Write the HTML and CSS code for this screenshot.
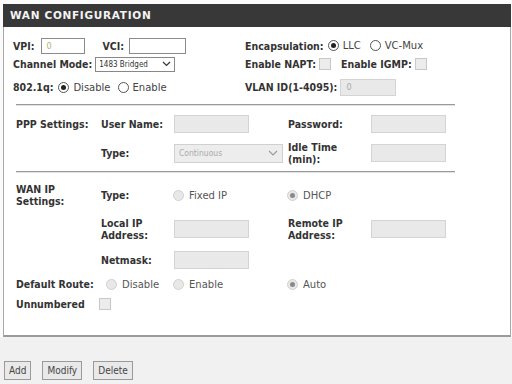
FILE: index.html
```html
<!DOCTYPE html>
<html lang="en">

<head>
    <meta charset="UTF-8">
    <title>WAN Configuration</title>
    <link rel="stylesheet" href="styles.css">
</head>

<body>
    <div class="panel">
        <div class="panel-head">WAN CONFIGURATION</div>

        <div class="top-grid">
            <div class="cell">
                <span class="lbl">VPI:</span>
                <span class="field vpi">0</span>
                <span class="lbl vci-lbl">VCI:</span>
                <span class="field vci"></span>
            </div>
            <div class="cell">
                <span class="lbl">Encapsulation:</span>
                <span class="radio on"></span><span class="val">LLC</span>
                <span class="radio gap-l"></span><span class="val">VC-Mux</span>
            </div>
            <div class="cell">
                <span class="lbl">Channel Mode:</span>
                <span class="select small-select">1483 Bridged
                    <svg width="9" height="6" viewBox="0 0 9 6"><polyline points="1,1 4.5,4.5 8,1" fill="none" stroke="#333" stroke-width="1.2"/></svg>
                </span>
            </div>
            <div class="cell">
                <span class="lbl">Enable NAPT:</span>
                <span class="check"></span>
                <span class="lbl igmp-lbl">Enable IGMP:</span>
                <span class="check"></span>
            </div>
            <div class="cell">
                <span class="lbl">802.1q:</span>
                <span class="radio on q-radio"></span><span class="val">Disable</span>
                <span class="radio gap-s"></span><span class="val">Enable</span>
            </div>
            <div class="cell">
                <span class="lbl">VLAN ID(1-4095):</span>
                <span class="field dis vlan">0</span>
            </div>
        </div>

        <div class="rule"></div>

        <div class="form-grid ppp">
            <span class="lbl">PPP Settings:</span>
            <span class="lbl">User Name:</span>
            <span class="field dis"></span>
            <span class="lbl">Password:</span>
            <span class="field dis"></span>

            <span></span>
            <span class="lbl">Type:</span>
            <span class="select wide-select">Continuous
                <svg width="10" height="6" viewBox="0 0 10 6"><polyline points="1,1 5,5 9,1" fill="none" stroke="#999" stroke-width="1.1"/></svg>
            </span>
            <span class="lbl">Idle Time<br>(min):</span>
            <span class="field dis"></span>
        </div>

        <div class="rule"></div>

        <div class="form-grid wan">
            <span class="lbl">WAN IP<br>Settings:</span>
            <span class="lbl">Type:</span>
            <span class="opt"><span class="radio dis"></span><span class="val">Fixed IP</span></span>
            <span class="opt"><span class="radio dis on"></span><span class="val">DHCP</span></span>
            <span></span>

            <span></span>
            <span class="lbl">Local IP<br>Address:</span>
            <span class="field dis"></span>
            <span class="lbl">Remote IP<br>Address:</span>
            <span class="field dis"></span>

            <span></span>
            <span class="lbl">Netmask:</span>
            <span class="field dis"></span>
            <span></span>
            <span></span>

            <span class="lbl">Default Route:</span>
            <span class="opt route-first"><span class="radio dis"></span><span class="val">Disable</span></span>
            <span class="opt"><span class="radio dis"></span><span class="val">Enable</span></span>
            <span class="opt"><span class="radio dis on"></span><span class="val">Auto</span></span>
            <span></span>

            <span class="lbl">Unnumbered</span>
            <span class="check dis unnum"></span>
            <span></span>
            <span></span>
            <span></span>
        </div>
    </div>

    <div class="footer">
        <button class="btn">Add</button>
        <button class="btn">Modify</button>
        <button class="btn">Delete</button>
    </div>
</body>

</html>
```

FILE: styles.css
```css
* {
    margin: 0;
    padding: 0;
    box-sizing: border-box;
}

body {
    width: 512px;
    height: 384px;
    background-color: #fbfbfb;
    font-family: "DejaVu Sans Condensed", "DejaVu Sans", sans-serif;
    font-size: 10px;
    color: #333;
    overflow: hidden;
}

.panel {
    margin: 4px 1px 0 3px;
    height: 333px;
    background-color: #fff;
    border: 1px solid #a8a8a8;
    border-top: none;
    border-bottom: 2px solid #9a9a9a;
}

.panel-head {
    height: 23px;
    line-height: 23px;
    margin: 0 -1px;
    padding-left: 7px;
    background-color: #383838;
    color: #f4f4f4;
    font-family: "DejaVu Sans", sans-serif;
    font-weight: bold;
    font-size: 10.5px;
    letter-spacing: .7px;
}

.lbl {
    font-weight: bold;
    font-size: 10.5px;
    color: #333;
    line-height: 12px;
}

.val {
    font-family: "DejaVu Sans", sans-serif;
    color: #444;
    margin-left: 4px;
}

/* top block */
.top-grid {
    display: grid;
    grid-template-columns: 232px auto;
    grid-template-rows: 19px 18px 28px;
    padding: 9px 0 0 9px;
}

.cell {
    display: flex;
    align-items: center;
}

.field {
    display: inline-block;
    height: 16px;
    line-height: 14px;
    padding-left: 5px;
    border: 1px solid #8a8a8a;
    background-color: #fff;
    color: #b9ae7a;
    font-size: 9px;
}

.field.dis {
    height: 18px;
    width: 75px;
    border-color: #d4d4d4;
    background-color: #e9e9e9;
    color: #aaa;
}

.vpi {
    width: 44px;
    margin-left: 6px;
}

.vci-lbl {
    margin-left: 18px;
}

.vci {
    width: 57px;
    margin-left: 5px;
}

.vlan.dis {
    width: 56px;
    height: 17px;
    margin-left: 3px;
}

.radio {
    display: inline-block;
    width: 11px;
    height: 11px;
    border-radius: 50%;
    border: 1px solid #555;
    background-color: #fff;
    position: relative;
    margin-left: 4px;
}

.radio.on::after {
    content: "";
    position: absolute;
    left: 2px;
    top: 2px;
    width: 5px;
    height: 5px;
    border-radius: 50%;
    background-color: #222;
}

.radio.dis {
    border-color: #d0d0d0;
    background-color: #e8e8e8;
    margin-left: 0;
}

.radio.dis.on::after {
    background-color: #8a8a8a;
}

.gap-l {
    margin-left: 9px;
}

.gap-s {
    margin-left: 7px;
}

.q-radio {
    margin-left: 5px;
}

.check {
    display: inline-block;
    width: 12px;
    height: 12px;
    border: 1px solid #c8c8c8;
    background-color: #ececec;
    margin-left: 3px;
}

.igmp-lbl {
    margin-left: 10px;
}

.select {
    display: inline-flex;
    align-items: center;
    justify-content: space-between;
    border: 1px solid #888;
    background-color: #fff;
}

.small-select {
    width: 80px;
    height: 15px;
    margin-left: 3px;
    padding: 0 3px 0 3px;
    font-size: 8px;
    color: #333;
}

.wide-select {
    width: 109px;
    height: 19px;
    padding: 0 4px;
    border-color: #d0d0d0;
    background-color: #ededed;
    color: #aaa;
    font-size: 8.5px;
}

.rule {
    height: 2px;
    margin-left: 12px;
    width: 439px;
    border-top: 1px solid #9a9a9a;
    border-bottom: 1px solid #e2e2e2;
}

.panel .top-grid + .rule {
    margin-top: 3px;
}

/* PPP and WAN IP blocks */
.form-grid {
    display: grid;
    grid-template-columns: 85px 73px 114px 83px 76px;
    align-items: center;
    padding-left: 12px;
}

.ppp {
    grid-template-rows: 24px 24px;
    row-gap: 5px;
    padding-top: 6px;
    padding-bottom: 6px;
}

.wan {
    grid-template-rows: 24px 35px 20px 20px 12px;
    row-gap: 4px;
    padding-top: 10px;
}

.opt {
    display: flex;
    align-items: center;
}

.opt .radio.dis {
    margin-left: -1px;
}

.opt .val {
    margin-left: 5px;
    color: #555;
}

.route-first .radio.dis {
    margin-left: 5px;
}

.unnum {
    margin-left: -2px;
}

.footer {
    background-color: #f1f1f1;
    height: 47px;
    padding: 24px 0 0 4px;
    display: flex;
    gap: 11px;
    align-items: flex-start;
}

.btn {
    height: 19px;
    padding: 0 4px;
    border: 1px solid #9a9a9a;
    background-color: #e9e9e9;
    font-family: "DejaVu Sans Condensed", "DejaVu Sans", sans-serif;
    font-size: 10px;
    color: #444;
}
```
